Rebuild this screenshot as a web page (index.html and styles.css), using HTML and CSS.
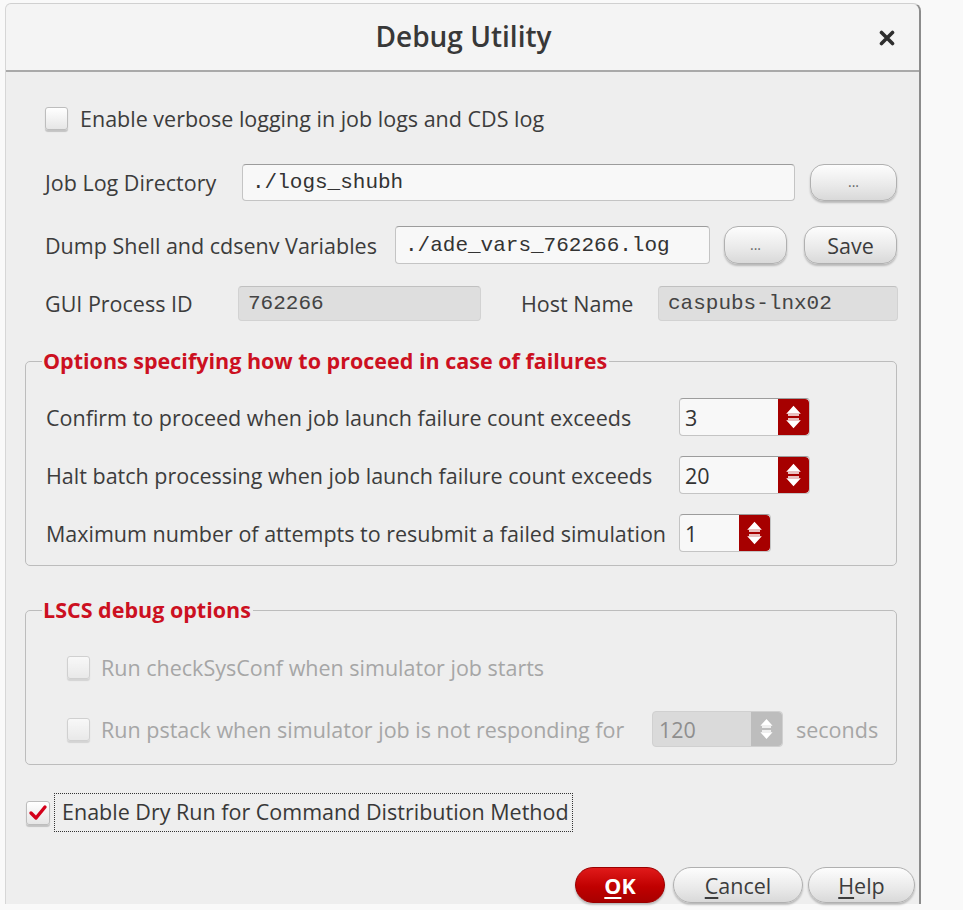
FILE: index.html
```html
<!DOCTYPE html>
<html>
<head>
<meta charset="utf-8">
<link rel="stylesheet" href="styles.css">
</head>
<body>
<div class="dialog">
  <div class="titlebar">
    <div class="title">Debug Utility</div>
    <div class="close"><svg viewBox="0 0 16 16" width="16" height="16"><path d="M2.5 2.5 L13.5 13.5 M13.5 2.5 L2.5 13.5" stroke="#2e2e2e" stroke-width="3.6" stroke-linecap="round"/></svg></div>
  </div>
  <div class="content">
    <div class="row row-verbose">
      <span class="cb"></span>
      <span class="lbl">Enable verbose logging in job logs and CDS log</span>
    </div>
    <div class="row row-joblog">
      <span class="lbl w-joblog">Job Log Directory</span>
      <span class="field f-joblog">./logs_shubh</span>
      <span class="btn b-dots1">...</span>
    </div>
    <div class="row row-dump">
      <span class="lbl w-dump">Dump Shell and cdsenv Variables</span>
      <span class="field f-dump">./ade_vars_762266.log</span>
      <span class="btn b-dots2">...</span>
      <span class="btn b-save">Save</span>
    </div>
    <div class="row row-gui">
      <span class="lbl w-gui">GUI Process ID</span>
      <span class="field ro f-pid">762266</span>
      <span class="lbl w-host">Host Name</span>
      <span class="field ro f-host">caspubs-lnx02</span>
    </div>

    <fieldset class="group g1">
      <legend>Options specifying how to proceed in case of failures</legend>
      <div class="grow">
        <span class="lbl w-opt">Confirm to proceed when job launch failure count exceeds</span>
        <span class="spin s-wide"><span class="sval">3</span><span class="sbtn"><svg viewBox="0 0 31 36" width="31" height="36"><path d="M10 14 L15.5 8 L21 14 Z M10 16 H21" fill="#fff" stroke="#fff" stroke-width="1.6"/><path d="M10 22 L15.5 28 L21 22 Z M10 20 H21" fill="#fff" stroke="#fff" stroke-width="1.6"/></svg></span></span>
      </div>
      <div class="grow">
        <span class="lbl w-opt">Halt batch processing when job launch failure count exceeds</span>
        <span class="spin s-wide"><span class="sval">20</span><span class="sbtn"><svg viewBox="0 0 31 36" width="31" height="36"><path d="M10 14 L15.5 8 L21 14 Z M10 16 H21" fill="#fff" stroke="#fff" stroke-width="1.6"/><path d="M10 22 L15.5 28 L21 22 Z M10 20 H21" fill="#fff" stroke="#fff" stroke-width="1.6"/></svg></span></span>
      </div>
      <div class="grow">
        <span class="lbl w-opt">Maximum number of attempts to resubmit a failed simulation</span>
        <span class="spin s-narrow"><span class="sval">1</span><span class="sbtn"><svg viewBox="0 0 31 36" width="31" height="36"><path d="M10 14 L15.5 8 L21 14 Z M10 16 H21" fill="#fff" stroke="#fff" stroke-width="1.6"/><path d="M10 22 L15.5 28 L21 22 Z M10 20 H21" fill="#fff" stroke="#fff" stroke-width="1.6"/></svg></span></span>
      </div>
    </fieldset>

    <fieldset class="group g2">
      <legend>LSCS debug options</legend>
      <div class="drow dr1">
        <span class="cb dis"></span>
        <span class="lbl dis-t">Run checkSysConf when simulator job starts</span>
      </div>
      <div class="drow dr2">
        <span class="w-pstack"><span class="cb dis"></span><span class="lbl dis-t">Run pstack when simulator job is not responding for</span></span>
        <span class="spin dspin"><span class="sval">120</span><span class="sbtn dbtn"><svg viewBox="0 0 31 36" width="31" height="36"><path d="M11 14 L15.5 9 L20 14 Z M11 16 H20" fill="#fff" stroke="#fff" stroke-width="1.4"/><path d="M11 22 L15.5 27 L20 22 Z M11 20 H20" fill="#fff" stroke="#fff" stroke-width="1.4"/></svg></span></span>
        <span class="lbl dis-t secs">seconds</span>
      </div>
    </fieldset>

    <div class="row row-dry">
      <span class="cb checked"><svg viewBox="0 0 22 22" width="22" height="22"><path d="M4 11 L9 16 L18 5" fill="none" stroke="#d4001a" stroke-width="3.4" stroke-linecap="round" stroke-linejoin="round"/></svg></span>
      <span class="lbl focus">Enable Dry Run for Command Distribution Method</span>
    </div>

    <div class="buttons">
      <span class="btn b-ok"><u>O</u>K</span>
      <span class="btn b-cancel"><u>C</u>ancel</span>
      <span class="btn b-help"><u>H</u>elp</span>
    </div>
  </div>
</div>
</body>
</html>
```

FILE: styles.css
```css
* { box-sizing: border-box; }
html, body { margin: 0; padding: 0; }
body {
  background: #f9f9f9;
  font-family: "Open Sans", "Noto Sans", sans-serif;
  color: #3a3a3a;
  width: 963px;
  height: 910px;
  overflow: hidden;
}
.dialog {
  margin: 3px 0 0 5px;
  width: 916px;
  height: 901px;
  background: #eeeeee;
  border-left: 1px solid #d6d6d6;
  border-right: 2px solid #8c8c8c;
  border-top: 1px solid #d0d0d0;
  border-radius: 6px 8px 0 0;
  display: flex;
  flex-direction: column;
}
.titlebar {
  height: 68px;
  background: #f4f4f4;
  border-bottom: 2px solid #a9a9a9;
  border-radius: 6px 8px 0 0;
  display: flex;
  align-items: center;
  justify-content: center;
  position: relative;
  flex: none;
}
.title {
  font-size: 28px;
  font-weight: 600;
  color: #383838;
  margin-left: 2px;
  margin-top: -2px;
}
.close {
  position: absolute;
  right: 24px;
  top: 26px;
  width: 16px;
  height: 16px;
  display: flex;
}
.content {
  padding: 0 22px 0 19px;
  flex: 1;
  display: flex;
  flex-direction: column;
}
.row {
  display: flex;
  align-items: center;
  padding-left: 20px;
}
.lbl {
  font-size: 21.5px;
  white-space: nowrap;
  color: #3c3c3c;
}
.cb {
  width: 23px;
  height: 23px;
  border: 1px solid #bdbdbd;
  border-radius: 3px;
  background: linear-gradient(#ffffff, #e6e6e6);
  box-shadow: 0 2px 1px rgba(0,0,0,0.18);
  flex: none;
  display: inline-flex;
  align-items: center;
  justify-content: center;
}
.row-verbose { margin-top: 34px; height: 24px; }
.row-verbose .cb { margin-right: 12px; }

.row-joblog { margin-top: 34px; height: 37px; }
.w-joblog { width: 197px; flex: none; }
.field {
  font-family: "Liberation Mono", monospace;
  font-size: 21px;
  color: #333;
  background: #f8f8f8;
  border: 1px solid #c4c4c4;
  border-top-color: #9c9c9c;
  border-radius: 4px;
  height: 100%;
  display: flex;
  align-items: center;
  padding-left: 9px;
  flex: none;
  white-space: nowrap;
}
.f-joblog { width: 553px; }
.btn {
  flex: none;
  display: inline-flex;
  align-items: center;
  justify-content: center;
  height: 100%;
  border: 1px solid #b0b0b0;
  border-radius: 14px;
  background: linear-gradient(#fdfdfd, #e9e9e9 60%, #d9d9d9);
  box-shadow: 0 2px 2px rgba(0,0,0,0.22);
  font-size: 21.5px;
  color: #3c3c3c;
}
.b-dots1 { width: 87px; margin-left: 15px; font-size: 14px; color: #666; padding-bottom: 2px; }

.row-dump { margin-top: 25px; height: 38px; }
.w-dump { width: 350px; flex: none; }
.f-dump { width: 315px; }
.b-dots2 { width: 63px; margin-left: 14px; font-size: 14px; color: #666; padding-bottom: 2px; }
.b-save { width: 93px; margin-left: 17px; }

.row-gui { margin-top: 22px; height: 35px; }
.w-gui { width: 193px; flex: none; }
.field.ro { background: #dedede; border-color: #d2d2d2; border-top-color: #c0c0c0; color: #444; }
.f-pid { width: 243px; }
.w-host { width: 137px; margin-left: 40px; flex: none; }
.f-host { width: 240px; }

.group {
  margin: 0;
  border: 1.5px solid #bcbcbc;
  border-radius: 5px;
  padding: 0 0 0 20px;
  min-width: 0;
}
.group legend {
  font-size: 21.5px;
  font-weight: 700;
  color: #cc1021;
  padding: 0 2px 0 1px;
  margin-left: -4px;
  line-height: 24px;
}
.g1 { margin-top: 28px; padding-top: 25px; padding-bottom: 13px; }
.grow {
  display: flex;
  align-items: center;
  height: 38px;
}
.grow + .grow { margin-top: 20px; }
.w-opt { width: 633px; flex: none; }
.spin {
  flex: none;
  height: 100%;
  display: flex;
  border: 1px solid #c4c4c4;
  border-top-color: #9c9c9c;
  border-radius: 4px;
  background: #f8f8f8;
  overflow: hidden;
}
.sval {
  flex: 1;
  display: flex;
  align-items: center;
  padding-left: 5px;
  font-size: 21.5px;
  color: #333;
}
.sbtn {
  width: 31px;
  flex: none;
  background: #a60000;
  display: flex;
  align-items: center;
  justify-content: center;
  border-radius: 0 4px 4px 0;
}
.s-wide { width: 131px; }
.s-narrow { width: 92px; }

.g2 { margin-top: 32px; padding-top: 33px; padding-bottom: 17px; padding-left: 41px; }
.g2 legend { margin-left: -25px; }
.drow { display: flex; align-items: center; }
.dr1 { height: 24px; }
.dr2 { height: 36px; margin-top: 32px; }
.cb.dis { opacity: 0.6; margin-right: 11px; }
.dis-t { color: #a6a6a6; }
.w-pstack { width: 585px; flex: none; display: flex; align-items: center; }
.dspin { width: 131px; background: #dadada; border-color: #d0d0d0; }
.dspin .sval { color: #8e8e8e; padding-left: 6px; }
.sbtn.dbtn { background: #bdbdbd; }
.secs { margin-left: 13px; }

.row-dry { margin-top: 28px; height: 39px; padding-left: 1px; }
.cb.checked { width: 24px; height: 24px; margin-right: 4px; }
.focus {
  border: 1px dotted #333;
  height: 100%;
  display: flex;
  align-items: center;
  padding: 0 3px 2px 7px;
  color: #383838;
}

.buttons {
  margin-top: auto;
  margin-bottom: 1px;
  margin-right: -18px;
  display: flex;
  justify-content: flex-end;
  height: 36px;
}
.buttons .btn { border-radius: 18px; font-size: 21.5px; }
.b-ok {
  width: 90px;
  background: linear-gradient(#e01a1a, #c00000 55%, #a80000);
  border-color: #9a0000;
  color: #fff;
  font-weight: 700;
}
.b-cancel { width: 130px; margin-left: 8px; }
.b-help { width: 107px; margin-left: 5px; }
u { text-decoration-thickness: 2px; text-underline-offset: 3px; }
```
